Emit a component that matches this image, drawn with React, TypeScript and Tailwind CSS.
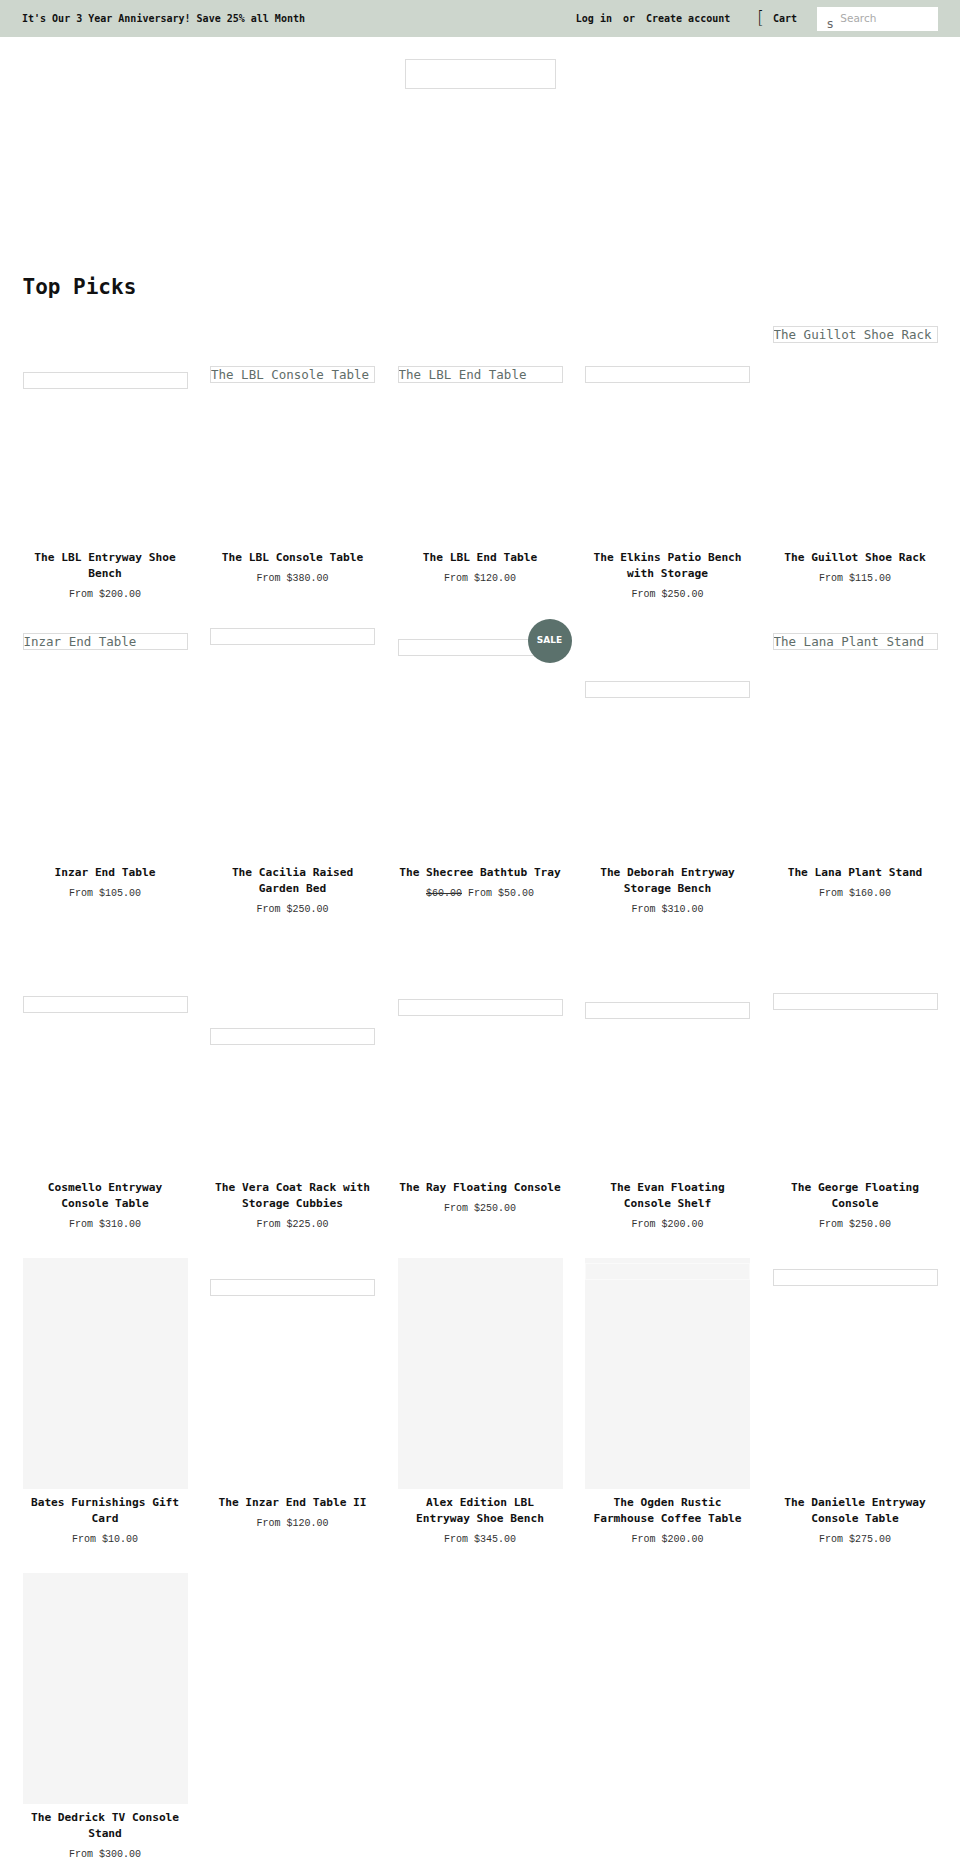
type Product = {
  name: string
  price: string
  compare?: string
  alt?: string
  offset?: string
  filled?: boolean
  sale?: boolean
}

const PRODUCTS: Product[] = [
  { name: 'The LBL Entryway Shoe Bench', price: 'From $200.00', offset: 'mt-[59px]' },
  { name: 'The LBL Console Table', price: 'From $380.00', alt: 'The LBL Console Table', offset: 'mt-[53px]' },
  { name: 'The LBL End Table', price: 'From $120.00', alt: 'The LBL End Table', offset: 'mt-[53px]' },
  { name: 'The Elkins Patio Bench with Storage', price: 'From $250.00', offset: 'mt-[53px]' },
  { name: 'The Guillot Shoe Rack', price: 'From $115.00', alt: 'The Guillot Shoe Rack', offset: 'mt-[13px]' },

  { name: 'Inzar End Table', price: 'From $105.00', alt: 'Inzar End Table', offset: 'mt-[5px]' },
  { name: 'The Cacilia Raised Garden Bed', price: 'From $250.00', offset: 'mt-0' },
  { name: 'The Shecree Bathtub Tray', price: 'From $50.00', compare: '$60.00', offset: 'mt-[11px]', sale: true },
  { name: 'The Deborah Entryway Storage Bench', price: 'From $310.00', offset: 'mt-[53px]' },
  { name: 'The Lana Plant Stand', price: 'From $160.00', alt: 'The Lana Plant Stand', offset: 'mt-[5px]' },

  { name: 'Cosmello Entryway Console Table', price: 'From $310.00', offset: 'mt-[53px]' },
  { name: 'The Vera Coat Rack with Storage Cubbies', price: 'From $225.00', offset: 'mt-[85px]' },
  { name: 'The Ray Floating Console', price: 'From $250.00', offset: 'mt-[56px]' },
  { name: 'The Evan Floating Console Shelf', price: 'From $200.00', offset: 'mt-[59px]' },
  { name: 'The George Floating Console', price: 'From $250.00', offset: 'mt-[50px]' },

  { name: 'Bates Furnishings Gift Card', price: 'From $10.00', filled: true },
  { name: 'The Inzar End Table II', price: 'From $120.00', offset: 'mt-[21px]' },
  { name: 'Alex Edition LBL Entryway Shoe Bench', price: 'From $345.00', filled: true },
  { name: 'The Ogden Rustic Farmhouse Coffee Table', price: 'From $200.00', filled: true, offset: 'mt-[5px]' },
  { name: 'The Danielle Entryway Console Table', price: 'From $275.00', offset: 'mt-[11px]' },

  { name: 'The Dedrick TV Console Stand', price: 'From $300.00', filled: true },
]

const MONO = "font-['DejaVu_Sans_Mono',monospace]"

function ProductCard({ p }: { p: Product }) {
  return (
    <div className="flex flex-col">
      <div className={`relative h-[231px] ${p.filled ? 'bg-[#f5f5f5]' : ''}`}>
        {p.filled && p.offset && (
          <div className={`${p.offset} h-[17px] w-full border border-[#fafafa]`} />
        )}
        {!p.filled && (
          <div
            className={`${p.offset} h-[17px] w-full overflow-hidden whitespace-nowrap border border-[#dcdcdc] text-[12.5px] leading-[15px] text-[#5f6d69] ${MONO}`}
          >
            {p.alt}
          </div>
        )}
        {p.sale && (
          <div className="absolute -right-[9px] -top-[9px] flex h-[44px] w-[44px] items-center justify-center rounded-full bg-[#5b716c] font-['DejaVu_Sans',sans-serif] text-[9px] font-bold text-white">
            SALE
          </div>
        )}
      </div>
      <p className={`mt-[6px] text-center text-[11.2px] font-bold leading-[16px] text-[#111] ${MONO}`}>
        {p.name}
      </p>
      <p className="mt-[6px] text-center font-['Liberation_Mono',monospace] text-[10px] leading-[14px] text-[#333]">
        {p.compare && <s className="mr-[6px]">{p.compare}</s>}
        {p.price}
      </p>
    </div>
  )
}

export default function App() {
  return (
    <div className="min-h-[1875px] bg-white pb-[13px]">
      <div className={`flex h-[37px] items-center bg-[#cdd6cd] px-[22px] text-[10px] font-bold text-[#111] ${MONO}`}>
        <span>It's Our 3 Year Anniversary! Save 25% all Month</span>
        <div className="ml-auto flex items-center">
          <span>Log in</span>
          <span className="ml-[11px]">or</span>
          <span className="ml-[11px]">Create account</span>
          <span className="ml-[27px] font-['DejaVu_Sans',sans-serif] text-[17px] font-light leading-none">[</span>
          <span className="ml-[9px]">Cart</span>
          <div className="ml-[20px] flex h-[24px] w-[121px] items-start bg-white pl-[10px] font-['DejaVu_Sans',sans-serif] font-normal">
            <span className="mt-[10px] text-[12px] leading-[14px] text-[#666]">s</span>
            <span className="ml-[7px] mt-[4px] text-[10.5px] leading-[14px] text-[#aaa]">Search</span>
          </div>
        </div>
      </div>

      <div className="mx-auto mt-[22px] h-[30px] w-[151px] border border-[#dddddd]" />

      <div className="px-[22.5px]">
        <h2 className={`mt-[185px] text-[21px] font-bold leading-[26px] text-[#111] ${MONO}`}>Top Picks</h2>
        <div className="mt-[13px] grid grid-cols-5 gap-x-[22.5px] gap-y-[26px]">
          {PRODUCTS.map((p) => (
            <ProductCard key={p.name} p={p} />
          ))}
        </div>
      </div>
    </div>
  )
}
